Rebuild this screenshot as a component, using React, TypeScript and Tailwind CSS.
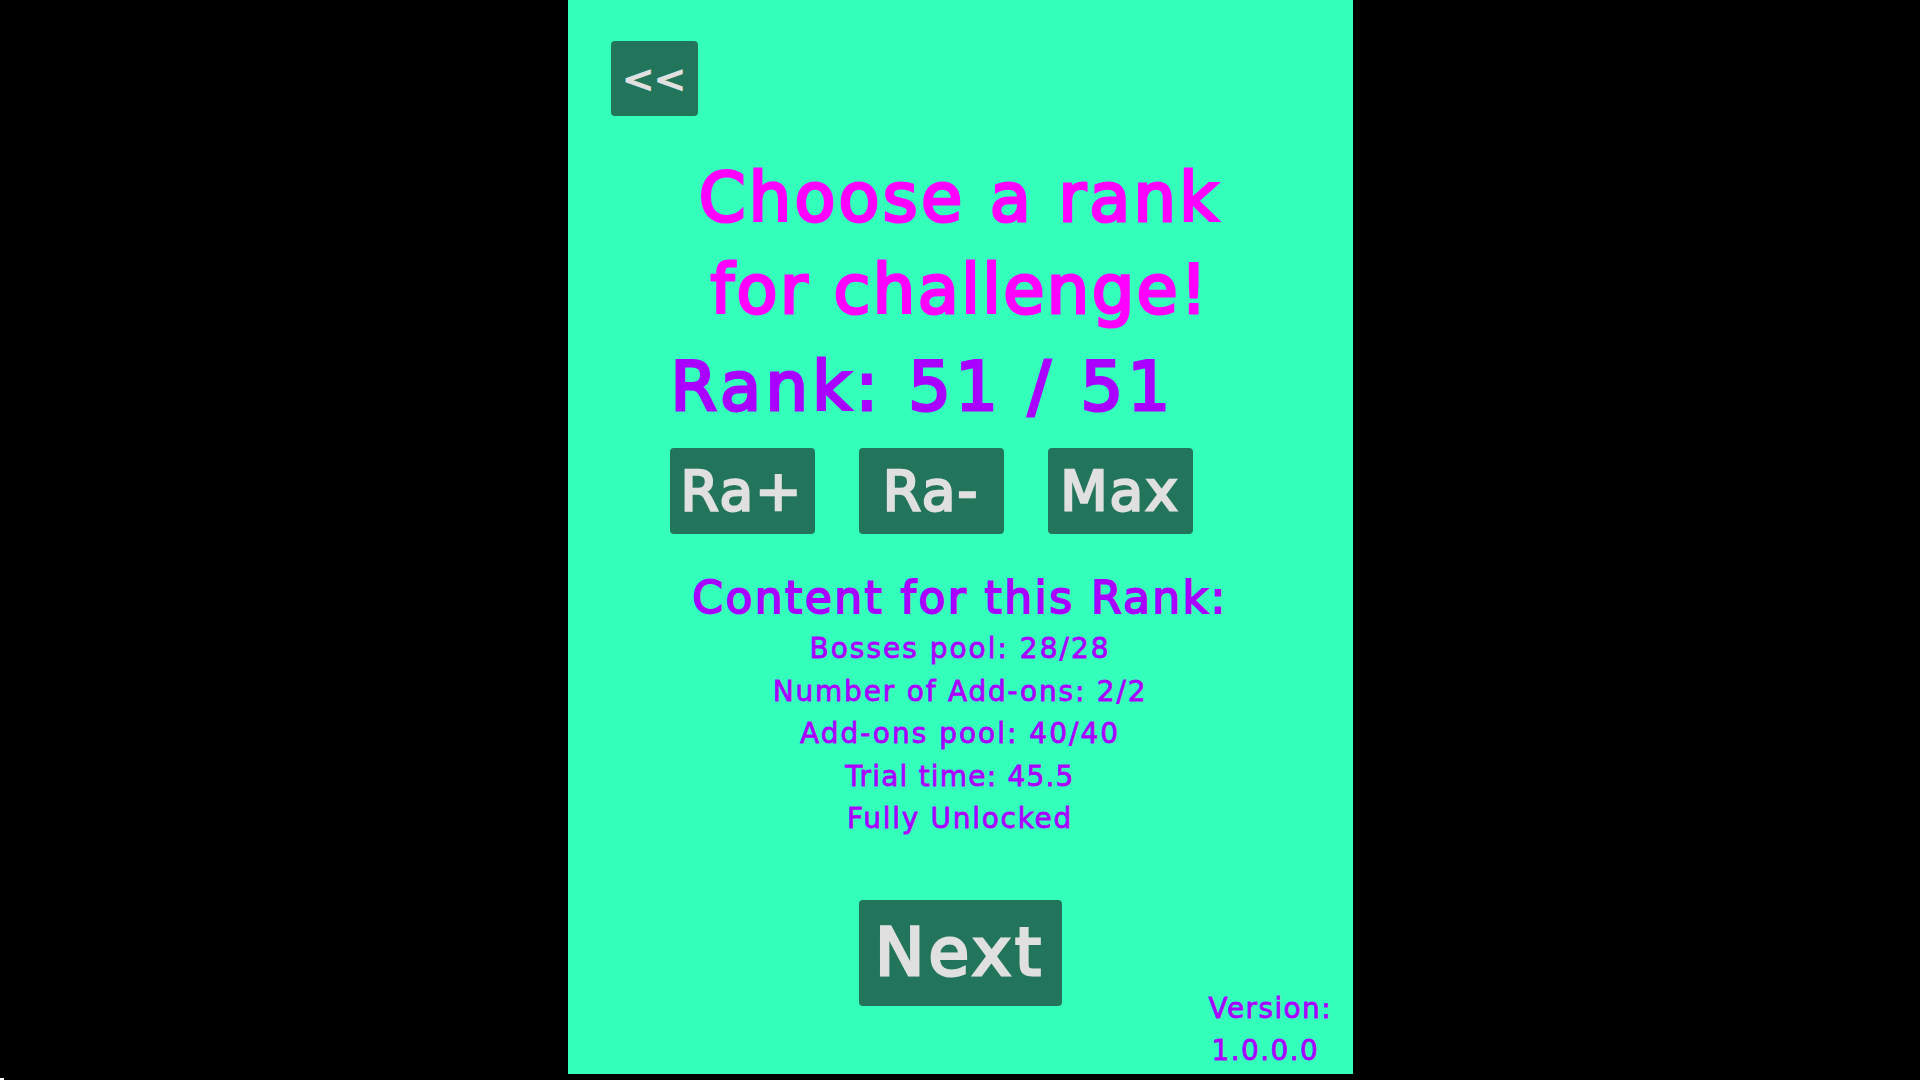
const rankButtons = ['Ra+', 'Ra-', 'Max'];
const contentRows = [
  { text: 'Bosses pool: 28/28', track: 'tracking-[2px]' },
  { text: 'Number of Add-ons: 2/2', track: 'tracking-[1.8px]' },
  { text: 'Add-ons pool: 40/40', track: 'tracking-[2px]' },
  { text: 'Trial time: 45.5', track: 'tracking-[1.2px]' },
  { text: 'Fully Unlocked', track: 'tracking-[1.7px]' },
];

export default function App() {
  return (
    <div className="relative flex h-screen w-full items-start justify-center overflow-hidden bg-black font-['DejaVu_Sans',sans-serif]">
      <div className="flex h-[1074px] w-[785px] flex-col bg-[#33ffbb]">
        {/* Back */}
        <div className="pl-[43px] pt-[41px]">
          <button className="flex h-[75px] w-[87px] items-center justify-center rounded-[4px] bg-[#22755a] text-[38px] leading-none text-[#e0e0e0] [-webkit-text-stroke:1.5px_#e0e0e0]">
            {'<<'}
          </button>
        </div>

        {/* Title */}
        <h1 className="mt-[36px] text-center text-[67px] leading-[92px] font-normal text-[#ff00ff] [-webkit-text-stroke:3px_#ff00ff]">
          <span className="tracking-[3.2px]">Choose a rank</span>
          <br />
          <span className="tracking-[2.4px]">for challenge!</span>
        </h1>

        {/* Rank picker */}
        <div className="pl-[103px]">
          <div className="mt-[5px] text-[67px] leading-[92px] tracking-[4.4px] text-[#aa00ff] [-webkit-text-stroke:3px_#aa00ff]">Rank: 51 / 51</div>
          <div className="-ml-px mt-[15px] flex gap-[44px]">
            {rankButtons.map((label) => (
              <button
                key={label}
                className="flex h-[86px] w-[145px] items-center justify-center rounded-[4px] bg-[#22755a] text-[55px] leading-none tracking-[2px] text-[#e0e0e0] [-webkit-text-stroke:2.5px_#e0e0e0]"
              >
                {label}
              </button>
            ))}
          </div>
        </div>

        {/* Content */}
        <div className="mt-[36px] flex flex-col items-center text-[#aa00ff]">
          <h2 className="mb-[3px] text-[44px] leading-[55px] font-normal tracking-[2.4px] [-webkit-text-stroke:1.8px_#aa00ff]">Content for this Rank:</h2>
          {contentRows.map((row) => (
            <div key={row.text} className={`text-[28px] leading-[42.5px] ${row.track} [-webkit-text-stroke:0.8px_#aa00ff]`}>
              {row.text}
            </div>
          ))}
        </div>

        {/* Next + version */}
        <div className="mt-[59px] grid grid-cols-[1fr_203px_1fr]">
          <div />
          <button className="flex h-[106px] items-center justify-center rounded-[4px] bg-[#22755a] text-[66px] leading-none tracking-[4px] text-[#e0e0e0] [-webkit-text-stroke:3px_#e0e0e0]">
            Next
          </button>
          <div className="col-start-3 mt-[88px] pl-[147px] text-[28px] leading-[42.5px] tracking-[1.4px] whitespace-nowrap text-[#aa00ff] [-webkit-text-stroke:0.8px_#aa00ff]">
            Version:
            <br />
            <span className="pl-[3px]">1.0.0.0</span>
          </div>
        </div>
      </div>
      <div className="absolute bottom-0 left-0 h-[2px] w-[4px] bg-white" />
    </div>
  );
}
